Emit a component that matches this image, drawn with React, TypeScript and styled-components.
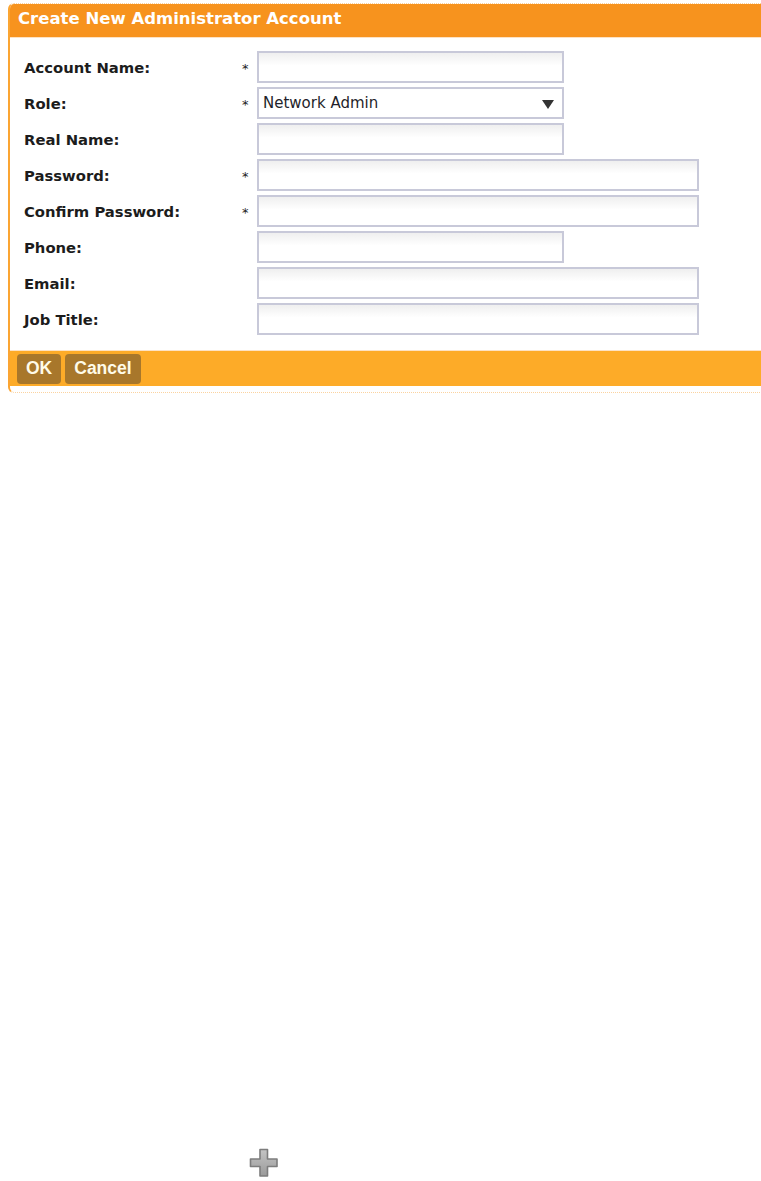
import { useState } from "react";
import styled, { createGlobalStyle } from "styled-components";

const GlobalStyle = createGlobalStyle`
  html, body {
    margin: 0;
    padding: 0;
    background: white;
    overflow-x: hidden;
  }
  body {
    font-family: "DejaVu Sans", Verdana, sans-serif;
  }
`;

const Page = styled.div`
  width: 761px;
  min-height: 1181px;
  padding-top: 3px;
  box-sizing: border-box;
  display: flex;
  flex-direction: column;
`;

const Panel = styled.section`
  margin-left: 8px;
  width: 780px;
  border-left: 2px solid #fba533;
  border-top: 1px dotted #fbd3a0;
  border-bottom: 1px dotted #fbd3a0;
  border-radius: 6px 0 0 6px;
  padding-bottom: 6px;
  overflow: hidden;
`;

const Header = styled.h2`
  margin: 0;
  height: 33px;
  padding-left: 8px;
  background: #f7931e;
  color: white;
  font-size: 16.5px;
  font-weight: 700;
  line-height: 29px;
  border-bottom: 1px solid #fde2c4;
`;

const Form = styled.form`
  padding: 13px 0 15px 14px;
  display: flex;
  flex-direction: column;
  gap: 4px;
`;

const Row = styled.div`
  display: grid;
  grid-template-columns: 218px 15px auto;
  align-items: center;
  height: 32px;
`;

const Label = styled.label`
  font-size: 14.8px;
  font-weight: 700;
  color: #1c1c1c;
`;

const Required = styled.span`
  font-size: 13px;
  color: #222;
  padding-top: 2px;
`;

const Input = styled.input<{ $wide?: boolean }>`
  width: ${(p) => (p.$wide ? "442px" : "307px")};
  height: 32px;
  box-sizing: border-box;
  border: 2px solid #c8c9d9;
  background: linear-gradient(#efefef, #ffffff 45%);
  font: 15px "DejaVu Sans", Verdana, sans-serif;
  padding: 0 4px;
  outline: none;
`;

const Select = styled.div`
  width: 307px;
  height: 32px;
  box-sizing: border-box;
  border: 2px solid #c8c9d9;
  background: white;
  display: flex;
  align-items: center;
  justify-content: space-between;
  padding: 0 8px 0 4px;
  font-size: 15px;
  color: #1f1f2a;
`;

const Arrow = styled.span`
  width: 0;
  height: 0;
  border-left: 6px solid transparent;
  border-right: 6px solid transparent;
  border-top: 9px solid #333;
  margin-top: 2px;
`;

const Footer = styled.div`
  height: 35px;
  background: #fdab28;
  display: flex;
  align-items: center;
  gap: 4px;
  padding-left: 7px;
  border-top: 1px solid #fde2c4;
`;

const Button = styled.button`
  height: 30px;
  border: none;
  border-radius: 4px;
  background: #a8772b;
  color: #fffbe8;
  font: 700 17.5px "Liberation Sans", Arial, sans-serif;
  padding: 0 9px;
  cursor: pointer;
`;

const AddArea = styled.div`
  margin-top: 755px;
  margin-left: 249px;
  width: 30px;
  height: 30px;
`;

type Field = {
  label: string;
  required?: boolean;
  wide?: boolean;
  type?: string;
};

const fields: Field[] = [
  { label: "Account Name:", required: true },
  { label: "Role:", required: true },
  { label: "Real Name:" },
  { label: "Password:", required: true, wide: true, type: "password" },
  { label: "Confirm Password:", required: true, wide: true, type: "password" },
  { label: "Phone:" },
  { label: "Email:", wide: true },
  { label: "Job Title:", wide: true },
];

function PlusIcon() {
  return (
    <svg width="30" height="30" viewBox="0 0 30 30">
      <defs>
        <linearGradient id="plusFill" x1="0" y1="0" x2="0" y2="1">
          <stop offset="0" stopColor="#c4c4c4" />
          <stop offset="1" stopColor="#9a9a9a" />
        </linearGradient>
      </defs>
      <path
        d="M11 1.5h7.5v9.5h9.5v7.5h-9.5v9.5H11v-9.5H1.5V11H11z"
        fill="url(#plusFill)"
        stroke="#7d7d7d"
        strokeWidth="1.6"
        strokeLinejoin="round"
      />
    </svg>
  );
}

export default function App() {
  const [values, setValues] = useState<Record<string, string>>({});

  return (
    <Page>
      <GlobalStyle />
      <Panel>
        <Header>Create New Administrator Account</Header>
        <Form onSubmit={(event) => event.preventDefault()}>
          {fields.map((field) => (
            <Row key={field.label}>
              <Label>{field.label}</Label>
              <Required>{field.required ? "*" : ""}</Required>
              {field.label === "Role:" ? (
                <Select>
                  Network Admin
                  <Arrow />
                </Select>
              ) : (
                <Input
                  $wide={field.wide}
                  type={field.type ?? "text"}
                  value={values[field.label] ?? ""}
                  onChange={(event) =>
                    setValues({ ...values, [field.label]: event.target.value })
                  }
                />
              )}
            </Row>
          ))}
        </Form>
        <Footer>
          <Button type="button">OK</Button>
          <Button type="button">Cancel</Button>
        </Footer>
      </Panel>
      <AddArea>
        <PlusIcon />
      </AddArea>
    </Page>
  );
}
